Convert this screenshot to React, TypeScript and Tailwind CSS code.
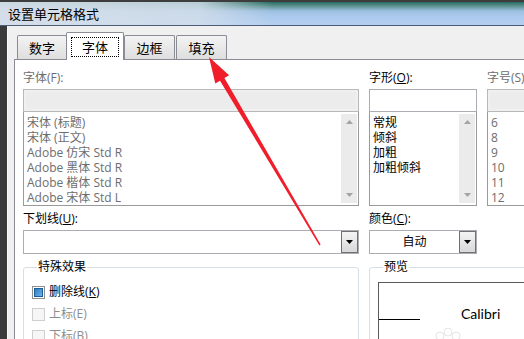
import React from "react";

const fontList = ["宋体 (标题)", "宋体 (正文)", "Adobe 仿宋 Std R", "Adobe 黑体 Std R", "Adobe 楷体 Std R", "Adobe 宋体 Std L"];
const styleList = ["常规", "倾斜", "加粗", "加粗倾斜"];
const sizeList = ["6", "8", "9", "10", "11", "12"];

function Label({ children, disabled }: { children: React.ReactNode; disabled?: boolean }) {
    return (
        <div className={`h-[14px] leading-[14px] whitespace-nowrap ${disabled ? "text-[#6d6d6d]" : "text-black"}`}>
            {children}
        </div>
    );
}

function ScrollBar() {
    return (
        <div className="flex w-[16px] shrink-0 flex-col items-center justify-between bg-[#ebebeb] py-[6px] my-[2px] mr-[1px]">
            <svg width="7" height="4" viewBox="0 0 7 4">
                <path d="M0 4 L3.5 0 L7 4 Z" fill="#a3a3a3" />
            </svg>
            <svg width="7" height="4" viewBox="0 0 7 4">
                <path d="M0 0 L3.5 4 L7 0 Z" fill="#a3a3a3" />
            </svg>
        </div>
    );
}

function ListColumn({
    width,
    label,
    items,
    disabled,
    scroll,
}: {
    width: string;
    label: React.ReactNode;
    items: string[];
    disabled?: boolean;
    scroll?: boolean;
}) {
    return (
        <div className={`${width} shrink-0`}>
            <Label disabled={disabled}>{label}</Label>
            <div
                className={`mt-[4px] h-[23px] border border-[#abadb3] ${disabled ? "bg-[#f0f0f0] border-[#b8b8b8]" : "bg-white"}`}
            >
                {disabled && <div className="m-[2px] h-[17px] bg-[#ececec]" />}
            </div>
            <div className="flex h-[94px] border-x border-b border-[#9a9a9a] bg-white">
                <div
                    className={`flex-1 pl-[3px] pt-[3px] leading-[15px] ${disabled ? "text-[#6d6d6d]" : "text-black"}`}
                >
                    {items.map((it) => (
                        <div key={it} className="h-[15px] whitespace-nowrap">
                            {it}
                        </div>
                    ))}
                </div>
                {scroll && <ScrollBar />}
            </div>
        </div>
    );
}

function DropDown({ width, value }: { width: string; value?: string }) {
    return (
        <div className={`${width} mt-[4px] flex h-[24px] shrink-0 border border-[#abadb3] bg-white`}>
            <div className="flex flex-1 items-center justify-center leading-[14px] text-black">{value}</div>
            <div className="flex w-[17px] items-center justify-center border border-[#707070] bg-[linear-gradient(to_bottom,#f4f4f4,#d8d8d8)]">
                <svg width="7" height="4" viewBox="0 0 7 4">
                    <path d="M0 0 L3.5 4 L7 0 Z" fill="#000" />
                </svg>
            </div>
        </div>
    );
}

function CheckRow({ label, checked, disabled }: { label: React.ReactNode; checked?: boolean; disabled?: boolean }) {
    return (
        <div className="flex h-[22px] items-center gap-[4px]">
            <div
                className={`flex h-[13px] w-[13px] items-center justify-center border ${
                    disabled ? "border-[#cfcfcf] bg-[#f6f6f6]" : "border-[#8e8f8f] bg-white"
                }`}
            >
                {checked && (
                    <div className="h-[9px] w-[9px] border border-[#1c5d96] bg-[linear-gradient(135deg,#2d7cc4,#6db3e8)]" />
                )}
            </div>
            <span className={`leading-[14px] ${disabled ? "text-[#8d8d8d]" : "text-black"}`}>{label}</span>
        </div>
    );
}

function Tab({ label, selected, className }: { label: string; selected?: boolean; className?: string }) {
    if (selected) {
        return (
            <div
                className={`relative z-10 -mb-px flex h-[28px] flex-col items-center rounded-t-[2px] border border-b-0 border-[#898c95] bg-white pt-[4px] ${className}`}
            >
                <span className="flex h-[20px] items-center border border-dotted border-black px-[10px] text-[13px] leading-[14px]">
                    {label}
                </span>
            </div>
        );
    }
    return (
        <div
            className={`flex h-[24px] items-center justify-center rounded-t-[2px] border border-b-0 border-[#898c95] bg-[linear-gradient(to_bottom,#f3f3f3,#dedede)] text-[13px] leading-[14px] ${className}`}
        >
            {label}
        </div>
    );
}

export default function App() {
    return (
        <div className="relative flex h-[339px] w-[524px] flex-col overflow-hidden bg-[#3b3b3b] font-['Open_Sans','Noto_Sans_CJK_SC',sans-serif] text-[12px] text-black">
            {/* Title bar */}
            <div className="flex h-[26px] shrink-0 items-center border-t-2 border-b border-t-[#3d3d3d] border-b-[#4d5c78] bg-[linear-gradient(to_right,rgba(214,223,233,0.95)_0%,rgba(210,222,234,0.85)_38%,rgba(200,216,236,0)_52%),linear-gradient(to_bottom,#276b60_0px,#5d9290_4px,#9dbfe0_9px,#aac9ec_14px,#b3cff0_22px)] pl-[8px] text-[13px] leading-[14px]">
                设置单元格格式
            </div>

            <div className="flex min-h-0 flex-1">
                <div className="w-[7px] shrink-0 bg-[#3b3b3b]" />
                <div className="flex flex-1 flex-col border-l border-[#fbfbfb] bg-[#f0f0f0]">
                    {/* Tabs */}
                    <div className="flex h-[33px] shrink-0 items-end pl-[9px]">
                        <Tab label="数字" className="w-[50px]" />
                        <Tab label="字体" selected className="-ml-px w-[58px]" />
                        <Tab label="边框" className="w-[51px]" />
                        <Tab label="填充" className="ml-px w-[51px]" />
                    </div>

                    {/* Panel */}
                    <div className="ml-[6px] flex-1 overflow-hidden border-l border-t border-[#898c95] bg-white pl-[8px] pt-[11px]">
                        <div className="flex gap-[10px]">
                            <ListColumn width="w-[336px]" label="字体(F):" items={fontList} disabled scroll />
                            <ListColumn
                                width="w-[108px]"
                                label={
                                    <>
                                        字形(<span className="underline">O</span>):
                                    </>
                                }
                                items={styleList}
                                scroll
                            />
                            <ListColumn width="w-[70px]" label="字号(S):" items={sizeList} disabled />
                        </div>

                        <div className="mt-[6px] flex gap-[10px]">
                            <div className="w-[336px] shrink-0">
                                <Label>
                                    下划线(<span className="underline">U</span>):
                                </Label>
                                <DropDown width="w-[336px]" />
                            </div>
                            <div className="w-[108px] shrink-0">
                                <Label>
                                    颜色(<span className="underline">C</span>):
                                </Label>
                                <DropDown width="w-[108px]" value="自动" />
                            </div>
                        </div>

                        <div className="mt-[6px] flex gap-[10px]">
                            <fieldset className="h-[100px] w-[336px] shrink-0 rounded-[3px] border border-[#d5dfe5] pl-[8px]">
                                <legend className="ml-[5px] px-[1px] leading-[14px]">特殊效果</legend>
                                <div className="pt-[7px]">
                                    <CheckRow
                                        checked
                                        label={
                                            <>
                                                删除线(<span className="underline">K</span>)
                                            </>
                                        }
                                    />
                                    <CheckRow disabled label="上标(E)" />
                                    <CheckRow disabled label="下标(B)" />
                                </div>
                            </fieldset>
                            <fieldset className="h-[100px] w-[200px] shrink-0 rounded-[3px] border border-[#d5dfe5] pl-[8px]">
                                <legend className="ml-[5px] px-[1px] leading-[14px]">预览</legend>
                                <div className="mt-[8px] h-[80px] border border-[#5a5a5a] bg-white pt-[23px]">
                                    <div className="flex items-start">
                                        <div className="mt-[13px] h-px w-[41px] bg-black" />
                                        <span className="ml-[41px] font-['Lato',sans-serif] text-[14px] leading-[16px]">
                                            Calibri
                                        </span>
                                    </div>
                                </div>
                            </fieldset>
                        </div>
                    </div>
                </div>
            </div>

            {/* Annotation arrow + faint watermark */}
            <svg className="pointer-events-none absolute left-0 top-0" width="524" height="339" viewBox="0 0 524 339">
                <g fill="none" stroke="#e6e6e6" strokeWidth="1">
                    <circle cx="440" cy="336" r="4" />
                    <circle cx="448" cy="332" r="4" />
                    <circle cx="456" cy="336" r="4" />
                </g>
                <polygon
                    points="209,57 229.1,75.3 224.4,78.1 320.6,244.6 319.4,245.4 220,80.7 215.3,83.5"
                    fill="#f01e2a"
                />
            </svg>
        </div>
    );
}
